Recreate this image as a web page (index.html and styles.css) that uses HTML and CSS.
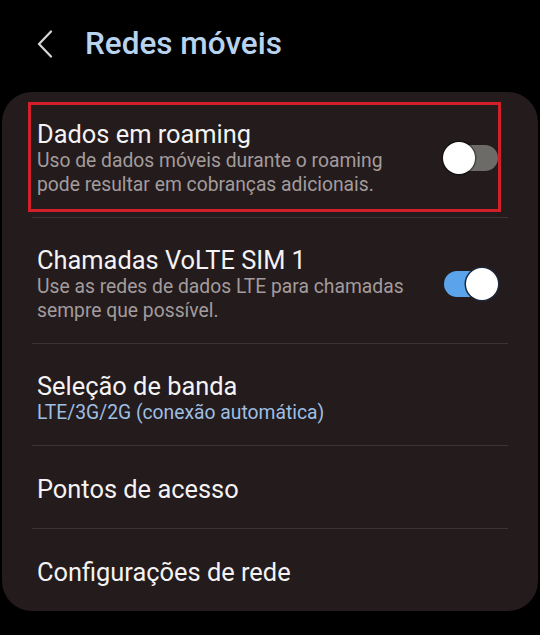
FILE: index.html
```html
<!DOCTYPE html>
<html lang="pt">
<head>
    <meta charset="UTF-8">
    <meta name="viewport" content="width=device-width, initial-scale=1.0">
    <title>Redes móveis</title>
    <link rel="stylesheet" href="styles.css">
</head>
<body>
    <header class="top-bar">
        <button class="back-btn" aria-label="Voltar">
            <svg width="16" height="28" viewBox="0 0 16 28">
                <polyline points="14,1.5 2,14 14,26.5" fill="none" stroke="#d6d6d6" stroke-width="2.2" stroke-linecap="round" stroke-linejoin="round"/>
            </svg>
        </button>
        <h1 class="page-title">Redes móveis</h1>
    </header>

    <div class="settings-card">
        <div class="item highlight">
            <div class="item-text">
                <div class="item-title">Dados em roaming</div>
                <div class="item-sub">Uso de dados móveis durante o roaming pode resultar em cobranças adicionais.</div>
            </div>
            <div class="switch"><span class="thumb"></span></div>
        </div>

        <div class="item">
            <div class="item-text">
                <div class="item-title">Chamadas VoLTE SIM 1</div>
                <div class="item-sub">Use as redes de dados LTE para chamadas sempre que possível.</div>
            </div>
            <div class="switch on"><span class="thumb"></span></div>
        </div>

        <div class="item">
            <div class="item-text">
                <div class="item-title">Seleção de banda</div>
                <div class="item-sub blue">LTE/3G/2G (conexão automática)</div>
            </div>
        </div>

        <div class="item single">
            <div class="item-text">
                <div class="item-title">Pontos de acesso</div>
            </div>
        </div>

        <div class="item single">
            <div class="item-text">
                <div class="item-title">Configurações de rede</div>
            </div>
        </div>
    </div>
</body>
</html>
```

FILE: styles.css
```css
body {
    margin: 0;
    background: #000;
    font-family: Roboto, 'Noto Sans', sans-serif;
    color: #f4f2f2;
}
.top-bar {
    height: 88px;
    display: flex;
    align-items: center;
    padding-left: 37px;
}
.back-btn {
    background: none;
    border: none;
    padding: 0;
    width: 16px;
    height: 28px;
    display: flex;
}
.page-title {
    margin: 0 0 0 32px;
    font-size: 31.5px;
    line-height: 36px;
    font-weight: 500;
    color: #b8d3ef;
}
.settings-card {
    margin: 4px 2px 0;
    background: #231b1c;
    border-radius: 30px;
    overflow: hidden;
}
.item {
    position: relative;
    margin: 0 30px;
    padding: 27px 10px 20px 5px;
    display: flex;
    align-items: center;
    border-top: 1px solid #3b3334;
}
.item:first-child {
    border-top: none;
}
.item.single {
    min-height: 83px;
    padding-top: 3px;
    padding-bottom: 0;
    box-sizing: border-box;
}
.item.highlight::after {
    content: '';
    position: absolute;
    left: -4px;
    right: 7px;
    top: 10px;
    bottom: 5px;
    border: 3px solid #d2202a;
}
.item-text {
    flex: 1;
    padding-right: 22px;
}
.item-title {
    font-size: 25.4px;
    line-height: 30px;
}
.item-sub {
    font-size: 19.3px;
    line-height: 24px;
    color: #a39c9c;
}
.item-sub.blue {
    color: #9ebee2;
}
.switch {
    position: relative;
    width: 54px;
    height: 26px;
    border-radius: 13px;
    background: #6d6b67;
    flex-shrink: 0;
}
.switch .thumb {
    position: absolute;
    top: -3px;
    left: -1px;
    width: 32px;
    height: 32px;
    border-radius: 50%;
    background: #fff;
    box-shadow: 0 0 0 1.5px rgba(0,0,0,0.35);
}
.switch.on {
    background: #5ba4ec;
}
.switch.on .thumb {
    left: auto;
    right: 0;
    box-shadow: 0 0 0 1.5px #1c2838;
}
```
